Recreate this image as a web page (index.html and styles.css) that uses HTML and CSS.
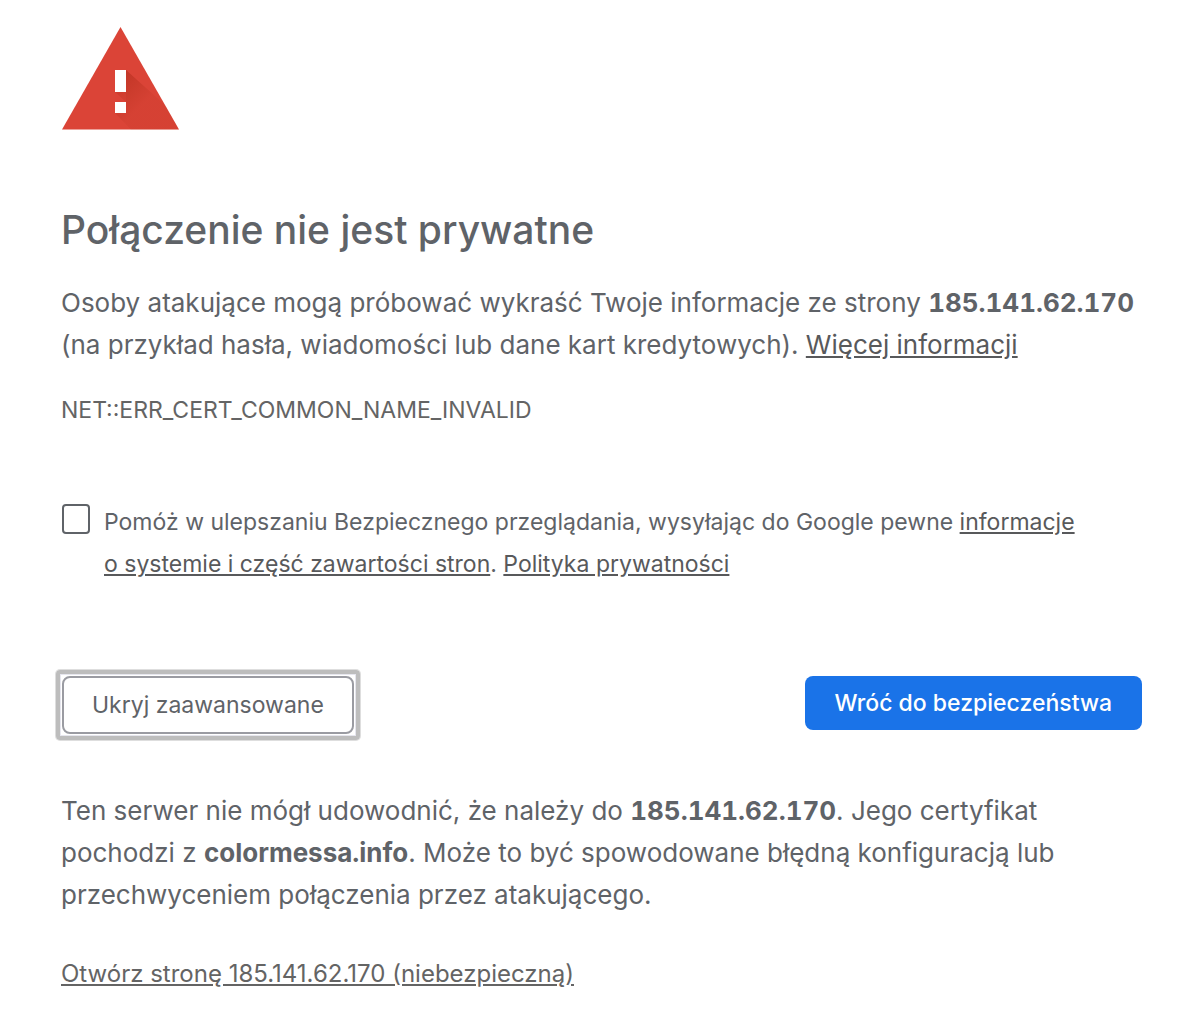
FILE: index.html
```html
<!DOCTYPE html>
<html lang="pl">
<head>
  <meta charset="UTF-8">
  <meta name="viewport" content="width=device-width, initial-scale=1.0">
  <title>Błąd prywatności</title>
  <link rel="stylesheet" href="styles.css">
</head>
<body>
  <main class="interstitial">
    <svg class="icon" viewBox="0 0 118 103" aria-hidden="true">
      <defs>
        <linearGradient id="shadow" gradientUnits="userSpaceOnUse" x1="54" y1="56" x2="78" y2="80">
          <stop offset="0" stop-color="#a52714" stop-opacity="0.45"/>
          <stop offset="1" stop-color="#a52714" stop-opacity="0.1"/>
        </linearGradient>
      </defs>
      <path d="M58.500 0L117 102.500H0z" fill="#db4437"/>
      <path d="M64 43L103 78 117 102.500H69L53 86 64 75 53 65z" fill="url(#shadow)"/>
      <path d="M53 65h11v10H53z" fill="#db4437" fill-opacity="0.4"/>
      <path d="M53 43h11v22H53zM53 75h11v11H53z" fill="#fff"/>
    </svg>
    <h1>Połączenie nie jest prywatne</h1>
    <p class="text">Osoby atakujące mogą próbować wykraść Twoje informacje ze strony <strong>185.141.62.170</strong> (na przykład hasła, wiadomości lub dane kart kredytowych). <a href="#">Więcej informacji</a></p>
    <div class="error-code">NET::ERR_CERT_COMMON_NAME_INVALID</div>
    <div class="opt-in">
      <input type="checkbox" id="opt-in">
      <label for="opt-in">Pomóż w ulepszaniu Bezpiecznego przeglądania, wysyłając do Google pewne <a href="#">informacje o&nbsp;systemie i&nbsp;część zawartości stron</a>. <a href="#">Polityka prywatności</a></label>
    </div>
    <div class="buttons">
      <button class="secondary">Ukryj zaawansowane</button>
      <button class="primary">Wróć do bezpieczeństwa</button>
    </div>
    <p class="text">Ten serwer nie mógł udowodnić, że należy do <strong>185.141.62.170</strong>. Jego certyfikat pochodzi z <strong>colormessa.info</strong>. Może to być spowodowane błędną konfiguracją lub przechwyceniem połączenia przez atakującego.</p>
    <a class="proceed" href="#">Otwórz stronę 185.141.62.170 (niebezpieczną)</a>
  </main>
</body>
</html>
```

FILE: styles.css
```css
* {
  box-sizing: border-box;
}
body {
  margin: 0;
  background: #fff;
  color: #5f6368;
  font-family: Inter, "Liberation Sans", sans-serif;
  font-size: 23px;
}
.interstitial {
  padding: 27px 46px 26px 61px;
}
.icon {
  display: block;
  width: 118px;
  height: 103px;
  margin-left: 1px;
}
h1 {
  margin: 75px 0 27px;
  font-size: 39px;
  font-weight: 450;
  line-height: 50px;
}
p {
  margin: 0;
}
.text {
  font-size: 26px;
  line-height: 42px;
}
strong {
  font-variant-numeric: tabular-nums;
}
a {
  color: #58595b;
  text-decoration: underline;
}
.error-code {
  margin-top: 28px;
  color: #646464;
  line-height: 32px;
}
.opt-in {
  display: flex;
  align-items: flex-start;
  gap: 14px;
  margin: 75px 0 0 1px;
  line-height: 42px;
}
.opt-in input {
  appearance: none;
  flex: none;
  width: 28px;
  height: 30px;
  margin: 3px 0 0;
  border: 2px solid #5f6368;
  border-radius: 4px;
  background: #fff;
}
.opt-in input:checked {
  background: #5f6368;
}
.buttons {
  display: flex;
  align-items: flex-start;
  justify-content: space-between;
  margin: 91px 0 56px 1px;
}
button {
  border: none;
  border-radius: 8px;
  padding: 0 30px;
  font: inherit;
  cursor: pointer;
}
.secondary {
  position: relative;
  height: 58px;
  padding: 0 28px;
  border: 2px solid #9a9ba2;
  background: #fff;
  color: #5f6368;
}
/* focus ring */
.secondary::before {
  content: "";
  position: absolute;
  inset: -8px;
  border: 4px solid #bdbdbd;
  border-radius: 4px;
  box-shadow: 0 0 0 1px #dedede, inset 0 0 0 1px #e6e6ee;
}
.primary {
  height: 54px;
  background: #1a73e8;
  color: #fff;
  font-weight: 500;
}
.proceed {
  display: inline-block;
  margin-top: 41px;
  color: #646464;
  font-size: 24px;
  line-height: 34px;
}
```
